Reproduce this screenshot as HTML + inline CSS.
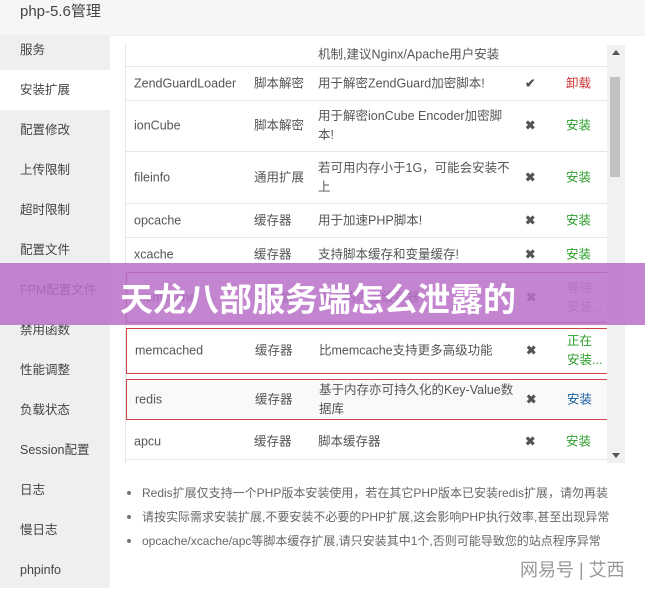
<!DOCTYPE html>
<html><head><meta charset="utf-8"><style>
*{margin:0;padding:0;box-sizing:border-box}
body{width:645px;height:588px;overflow:hidden;background:#fff;font-family:"Liberation Sans","Noto Sans CJK SC",sans-serif;position:relative;color:#555}
.hdr{position:absolute;left:0;top:0;width:645px;height:36px;background:#f6f6f6;border-bottom:1px solid #eee}
.hdr span{position:absolute;left:20px;top:0px;font-size:15px;color:#444}
.side{position:absolute;left:0;top:36px;width:110px;height:552px;background:#efefef}
.side div{position:absolute;left:20px;font-size:12.5px;color:#444;height:40px;line-height:40px}
.act{position:absolute;left:0;top:70px;width:110px;height:40px;background:#fff}
.tbl{position:absolute;left:125px;top:44px;width:482px;height:420px;overflow:hidden;border-left:1px solid #e6e6e6}
.r{position:absolute;left:0;width:482px;border-bottom:1px solid #e6e6e6;font-size:12.5px;color:#555}
.r span{position:absolute;top:50%;transform:translateY(-50%);line-height:19px}
.n{left:8px}.t{left:128px}.d{left:192px;width:195px}.i{left:399px;color:#555;font-weight:bold}.a{left:440px;color:#2a9d2a}
.sb{position:absolute;left:607px;top:45px;width:18px;height:418px;background:#f1f1f1}
.th{position:absolute;left:610px;top:77px;width:10px;height:100px;background:#c1c1c1}
.bn{position:absolute;left:0;top:263px;width:645px;height:62px;background:rgba(184,112,200,0.85)}
.bn span{position:absolute;left:120px;top:10px;font-size:33px;font-weight:bold;color:#fff;white-space:nowrap;font-family:"Noto Sans CJK SC",sans-serif}
.nt{position:absolute;left:142px;font-size:12px;color:#666;white-space:nowrap}
.nt:before{content:"";position:absolute;left:-15px;top:7px;width:4px;height:4px;border-radius:2px;background:#777}
.wm{position:absolute;left:520px;top:556px;font-size:18px;color:#999}
</style></head><body>
<div class="hdr"><span>php-5.6管理</span></div>
<div class="side">
<div style="top:-6px">服务</div>
<div class="act" style="left:0;top:34px"></div>
<div style="top:34px">安装扩展</div>
<div style="top:74px">配置修改</div>
<div style="top:114px">上传限制</div>
<div style="top:154px">超时限制</div>
<div style="top:194px">配置文件</div>
<div style="top:234px">FPM配置文件</div>
<div style="top:274px">禁用函数</div>
<div style="top:314px">性能调整</div>
<div style="top:354px">负载状态</div>
<div style="top:394px">Session配置</div>
<div style="top:434px">日志</div>
<div style="top:474px">慢日志</div>
<div style="top:514px">phpinfo</div>
</div>
<div class="tbl">
<div class="r" style="top:0;height:23px"><span class="d">机制,建议Nginx/Apache用户安装</span></div>
<div class="r" style="top:23px;height:34px"><span class="n">ZendGuardLoader</span><span class="t">脚本解密</span><span class="d">用于解密ZendGuard加密脚本!</span><span class="i">✔</span><span class="a" style="color:#c33">卸载</span></div>
<div class="r" style="top:57px;height:51px"><span class="n">ionCube</span><span class="t">脚本解密</span><span class="d">用于解密ionCube Encoder加密脚本!</span><span class="i">✖</span><span class="a">安装</span></div>
<div class="r" style="top:108px;height:52px"><span class="n">fileinfo</span><span class="t">通用扩展</span><span class="d">若可用内存小于1G，可能会安装不上</span><span class="i">✖</span><span class="a">安装</span></div>
<div class="r" style="top:160px;height:34px"><span class="n">opcache</span><span class="t">缓存器</span><span class="d">用于加速PHP脚本!</span><span class="i">✖</span><span class="a">安装</span></div>
<div class="r" style="top:194px;height:34px"><span class="n">xcache</span><span class="t">缓存器</span><span class="d">支持脚本缓存和变量缓存!</span><span class="i">✖</span><span class="a">安装</span></div>
<div class="r" style="top:228px;height:51px;border:1px solid #b05050"><span class="n">memcache</span><span class="t">缓存器</span><span class="d">强大的内容缓存器</span><span class="i">✖</span><span class="a" style="color:#999">等待<br>安装...</span></div>
<div class="r" style="top:284px;height:46px;border:1px solid #c44"><span class="n">memcached</span><span class="t">缓存器</span><span class="d">比memcache支持更多高级功能</span><span class="i">✖</span><span class="a">正在<br>安装...</span></div>
<div class="r" style="top:335px;height:41px;border:1px solid #c44;background:#f9f9f9"><span class="n">redis</span><span class="t">缓存器</span><span class="d">基于内存亦可持久化的Key-Value数据库</span><span class="i">✖</span><span class="a" style="color:#1a5fa0">安装</span></div>
<div class="r" style="top:381px;height:35px"><span class="n">apcu</span><span class="t">缓存器</span><span class="d">脚本缓存器</span><span class="i">✖</span><span class="a">安装</span></div>
</div>
<div class="sb"><div style="position:absolute;left:5px;top:5px;border:4px solid transparent;border-bottom:5px solid #555;border-top:0"></div><div style="position:absolute;left:5px;bottom:5px;border:4px solid transparent;border-top:5px solid #555;border-bottom:0"></div></div>
<div class="th"></div>
<div class="nt" style="top:484px">Redis扩展仅支持一个PHP版本安装使用，若在其它PHP版本已安装redis扩展，请勿再装</div>
<div class="nt" style="top:508px">请按实际需求安装扩展,不要安装不必要的PHP扩展,这会影响PHP执行效率,甚至出现异常</div>
<div class="nt" style="top:532px">opcache/xcache/apc等脚本缓存扩展,请只安装其中1个,否则可能导致您的站点程序异常</div>
<div class="bn"><span>天龙八部服务端怎么泄露的</span></div>
<div class="wm">网易号 | 艾西</div>
</body></html>
